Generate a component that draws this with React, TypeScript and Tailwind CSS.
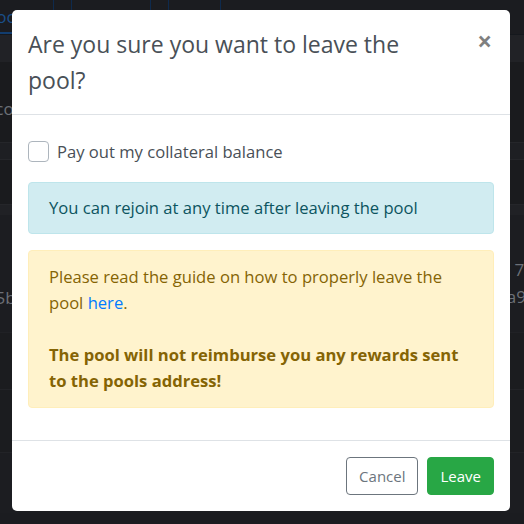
import { useState } from 'react'

/* ─── Dimmed page behind the modal ─────────────────────────────────── */

function BackgroundPage() {
  return (
    <div className="min-h-[524px] w-[524px] bg-[#1b1c20] text-[#6c7077] font-['Open_Sans',sans-serif] overflow-hidden">
      <div className="flex h-[35px] border-b border-[#15181d]">
        <div className="w-[62px] border-r border-[#0e2a4d] text-[#1a4f8a] text-[17px] pt-[4px] pl-0 -ml-[8px] border-b-2 border-b-[#123d6e]">
          locks
        </div>
        <div className="w-[17px]" />
        <div className="w-[80px] border-x border-[#0e2a4d]" />
        <div className="w-[17px]" />
        <div className="w-[52px] border-l border-[#0e2a4d]" />
        <div className="flex-1 border-l border-[#0e2a4d]" />
      </div>
      <div className="h-[27px] bg-[#212226]" />
      <div className="h-[81px] bg-[#1a1b1e] border-b border-[#25262a] flex items-center">
        <span className="text-[17px] -ml-[14px] mt-[14px]">Score</span>
      </div>
      <div className="h-[17px] bg-[#1e1f23] border-b border-[#25262a]" />
      <div className="h-[45px] bg-[#1a1b1e] border-b border-[#25262a]" />
      <div className="h-[10px] bg-[#202125]" />
      <div className="h-[118px] bg-[#1c1d21] border-b border-[#202125] flex justify-between items-end pb-[22px]">
        <span className="text-[17px] -ml-[14px]">e5b</span>
        <span className="text-[17px] leading-[27px] text-right -mr-[10px]">
          74
          <br />
          a9c
        </span>
      </div>
      <div className="h-[57px] bg-[#1b1c1f] border-b border-[#222327]" />
      <div className="h-[63px] bg-[#1b1c1f] border-b border-[#222327]" />
      <div className="h-[60px] bg-[#1c1d21]" />
    </div>
  )
}

/* ─── Leave Pool Modal ─────────────────────────────────────────────── */

function LeavePoolModal() {
  const [payout, setPayout] = useState(false)

  return (
    <div className="fixed inset-0 pt-[10px] px-[12px] font-['Open_Sans',sans-serif]">
      <div className="w-[498px] bg-white rounded-[5px] flex flex-col">
        {/* Header */}
        <div className="flex items-start justify-between p-[16px] border-b border-[#dee2e6]">
          <h4 className="text-[23px] leading-[36px] text-[#495057] font-normal w-[400px]">
            Are you sure you want to leave the pool?
          </h4>
          <button className="text-[26px] leading-[26px] font-bold text-[#000]/50 mr-[2px] mt-[2px]">×</button>
        </div>

        {/* Body */}
        <div className="px-[16px] pt-[26px] pb-[16px] text-[16.6px] leading-[26px]">
          <label className="flex items-center gap-[8px] mb-[19px] h-[22px] text-[#495057] cursor-pointer">
            <span
              onClick={() => setPayout(!payout)}
              className="w-[21px] h-[21px] -mt-[2px] rounded-[4px] border border-[#adb5bd] bg-white"
            />
            Pay out my collateral balance
          </label>

          <div className="px-[20px] py-[12px] mb-[16px] rounded-[4px] border border-[#bee5eb] bg-[#d1ecf1] text-[#0c5460]">
            You can rejoin at any time after leaving the pool
          </div>

          <div className="px-[20px] py-[13px] mb-[16px] rounded-[4px] border border-[#ffeeba] bg-[#fff3cd] text-[#856404]">
            Please read the guide on how to properly leave the pool{' '}
            <a className="text-[#007bff]">here</a>.
            <br />
            <br />
            <b className="font-bold">The pool will not reimburse you any rewards sent to the pools address!</b>
          </div>
        </div>

        {/* Footer */}
        <div className="flex justify-end items-center gap-[9px] p-[16px] border-t border-[#dee2e6]">
          <button className="h-[38px] px-[12px] rounded-[4px] border border-[#6c757d] text-[#6c757d] text-[15px]">
            Cancel
          </button>
          <button className="h-[38px] px-[12px] rounded-[4px] border border-[#28a745] bg-[#28a745] text-white text-[15px]">
            Leave
          </button>
        </div>
      </div>
    </div>
  )
}

export default function App() {
  return (
    <div className="relative w-[524px] h-[524px] overflow-hidden">
      <BackgroundPage />
      <LeavePoolModal />
    </div>
  )
}
